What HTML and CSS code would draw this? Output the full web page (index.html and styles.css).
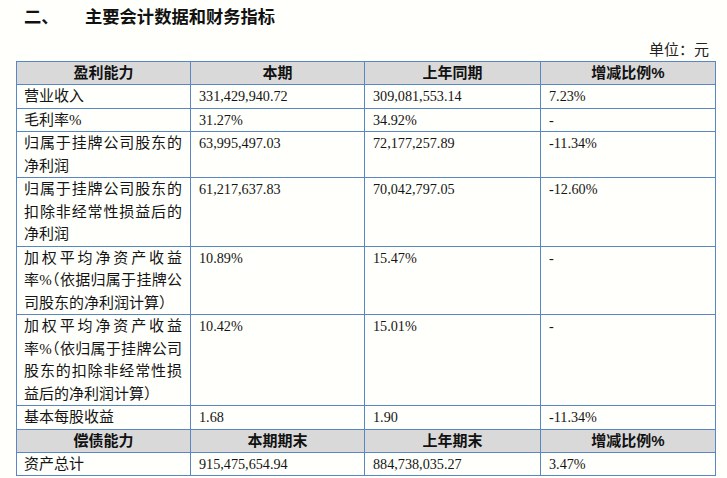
FILE: index.html
```html
<!DOCTYPE html>
<html lang="zh-CN">
<head>
<meta charset="utf-8">
<title>主要会计数据和财务指标</title>
<link rel="stylesheet" href="styles.css">
</head>
<body>
<div class="page">
  <h2 class="title"><span class="num">二、</span>主要会计数据和财务指标</h2>
  <div class="unit">单位：元</div>
  <table class="fin">
    <colgroup>
      <col class="c1"><col class="c2"><col class="c3"><col class="c4">
    </colgroup>
    <tr class="head">
      <th>盈利能力</th><th>本期</th><th>上年同期</th><th>增减比例%</th>
    </tr>
    <tr>
      <td class="lbl">营业收入</td><td>331,429,940.72</td><td>309,081,553.14</td><td>7.23%</td>
    </tr>
    <tr>
      <td class="lbl">毛利率%</td><td>31.27%</td><td>34.92%</td><td>-</td>
    </tr>
    <tr>
      <td class="lbl"><span class="jl">归属于挂牌公司股东的</span>净利润</td><td>63,995,497.03</td><td>72,177,257.89</td><td>-11.34%</td>
    </tr>
    <tr>
      <td class="lbl"><span class="jl">归属于挂牌公司股东的</span><span class="jl">扣除非经常性损益后的</span>净利润</td><td>61,217,637.83</td><td>70,042,797.05</td><td>-12.60%</td>
    </tr>
    <tr>
      <td class="lbl"><span class="jl">加权平均净资产收益</span><span class="jl">率%<span class="hw">（</span>依据归属于挂牌公</span>司股东的净利润计算<span class="hw">）</span></td><td>10.89%</td><td>15.47%</td><td>-</td>
    </tr>
    <tr>
      <td class="lbl"><span class="jl">加权平均净资产收益</span><span class="jl">率%<span class="hw">（</span>依归属于挂牌公司</span><span class="jl">股东的扣除非经常性损</span>益后的净利润计算<span class="hw">）</span></td><td>10.42%</td><td>15.01%</td><td>-</td>
    </tr>
    <tr>
      <td class="lbl">基本每股收益</td><td>1.68</td><td>1.90</td><td>-11.34%</td>
    </tr>
    <tr class="head">
      <th>偿债能力</th><th>本期期末</th><th>上年期末</th><th>增减比例%</th>
    </tr>
    <tr>
      <td class="lbl">资产总计</td><td>915,475,654.94</td><td>884,738,035.27</td><td>3.47%</td>
    </tr>
  </table>
</div>
</body>
</html>
```

FILE: styles.css
```css
html, body {
  margin: 0;
  padding: 0;
  background: #fffffb;
}

.page {
  width: 727px;
  height: 478px;
  overflow: hidden;
  color: #141414;
  font-family: "Liberation Serif", "Noto Sans CJK SC", serif;
}

.title {
  margin: 0;
  padding: 4px 0 0 24px;
  font-family: "Noto Sans CJK SC", sans-serif;
  font-weight: 700;
  font-size: 17.3px;
  line-height: 24px;
  color: #111;
}

.title .num {
  display: inline-block;
  width: 61px;
}

.unit {
  margin-top: 11px;
  padding-right: 18px;
  text-align: right;
  font-size: 15px;
  line-height: 22px;
  color: #222;
}

.fin {
  margin: 0 0 0 16px;
  border-collapse: collapse;
  table-layout: fixed;
  width: 699px;
}

.fin col.c1 { width: 174px; }
.fin col.c2 { width: 174px; }
.fin col.c3 { width: 176px; }
.fin col.c4 { width: 175px; }

.fin th,
.fin td {
  border: 1px solid #5a86c4;
  padding: 0 8px 0 8px;
  vertical-align: top;
  text-align: left;
  line-height: 22.5px;
}

.fin td {
  font-size: 14.2px;
}

.fin td.lbl {
  font-size: 15px;
  padding-left: 7px;
}

.fin tr.head th {
  background: #d9d9d9;
  text-align: center;
  font-family: "Liberation Sans", "Noto Sans CJK SC", sans-serif;
  font-weight: 700;
  font-size: 15px;
  line-height: 22px;
  color: #111;
}

.jl {
  display: block;
  white-space: nowrap;
  text-align: justify;
  text-align-last: justify;
}

.hw {
  font-feature-settings: "halt";
}
```
